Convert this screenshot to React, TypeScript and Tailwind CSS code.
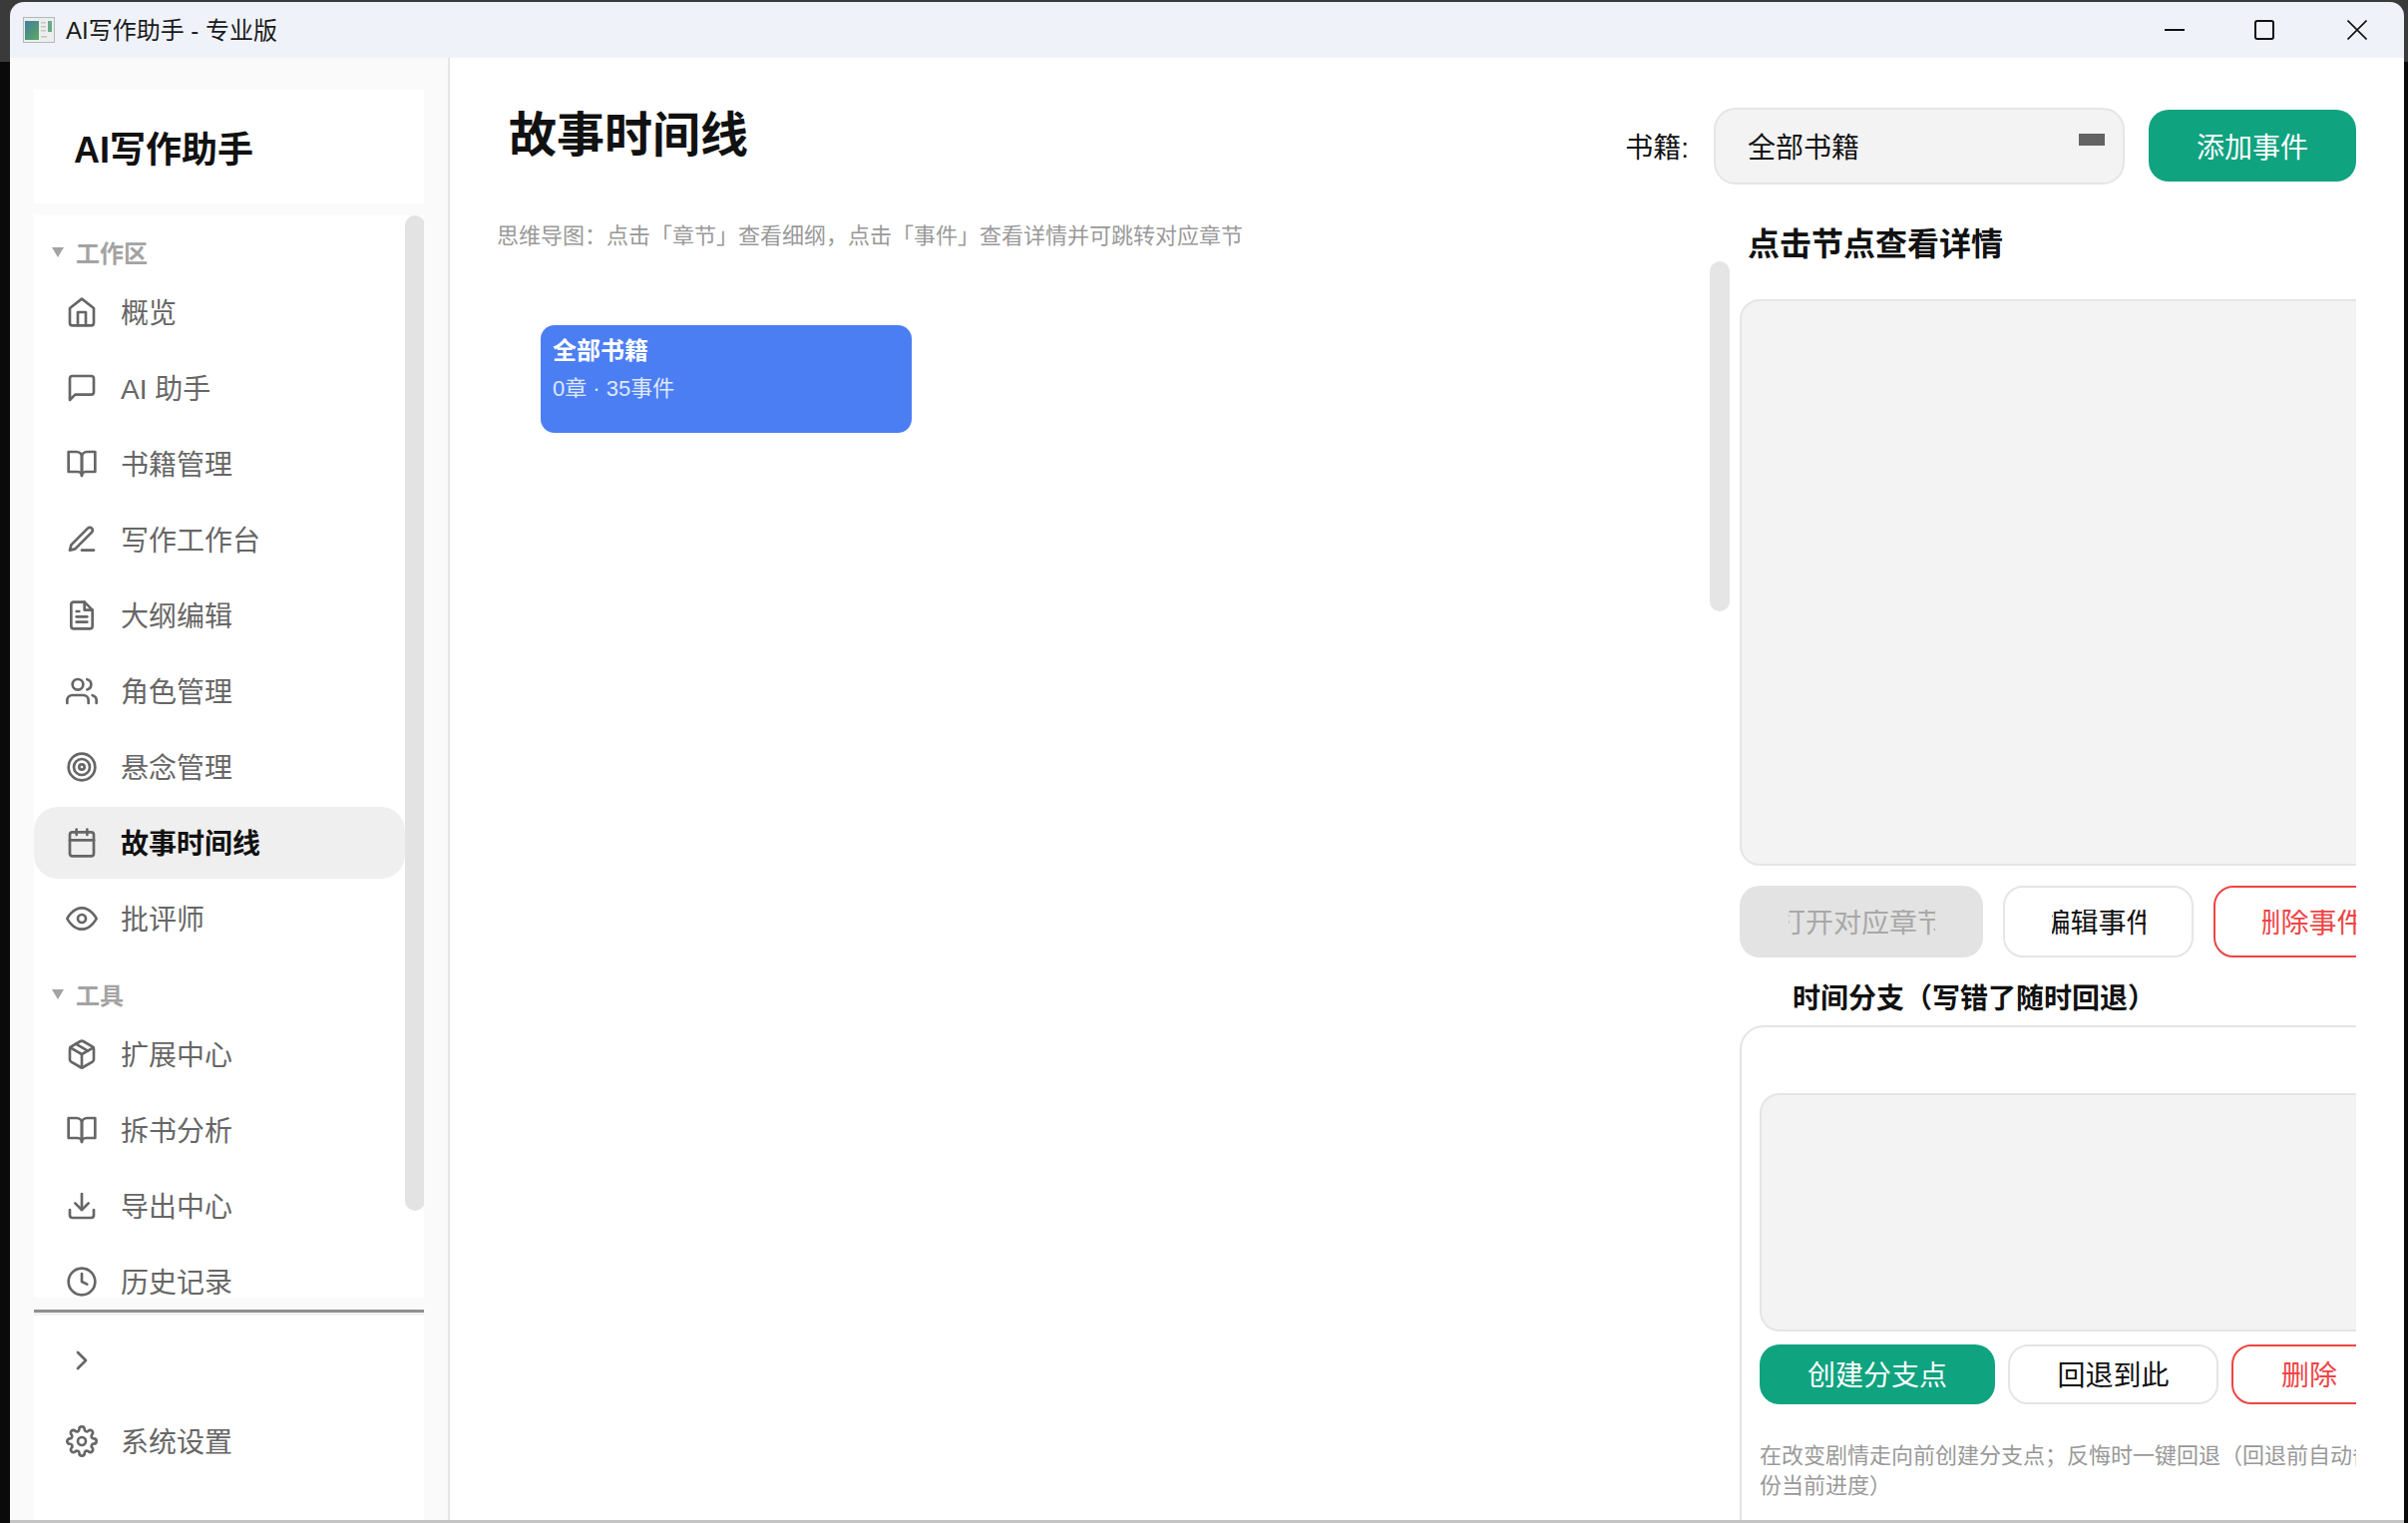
import React from 'react';
import {
  FiHome,
  FiMessageSquare,
  FiBookOpen,
  FiEdit3,
  FiFileText,
  FiUsers,
  FiTarget,
  FiCalendar,
  FiEye,
  FiPackage,
  FiDownload,
  FiClock,
  FiChevronRight,
  FiSettings,
} from 'react-icons/fi';

const FONT = "font-['Liberation_Sans','Noto_Sans_CJK_SC',sans-serif]";

type NavEntry = {
  label: string;
  icon: React.ComponentType<{ size?: number; className?: string }>;
  active?: boolean;
};

const workspace: NavEntry[] = [
  { label: '概览', icon: FiHome },
  { label: 'AI 助手', icon: FiMessageSquare },
  { label: '书籍管理', icon: FiBookOpen },
  { label: '写作工作台', icon: FiEdit3 },
  { label: '大纲编辑', icon: FiFileText },
  { label: '角色管理', icon: FiUsers },
  { label: '悬念管理', icon: FiTarget },
  { label: '故事时间线', icon: FiCalendar, active: true },
  { label: '批评师', icon: FiEye },
];

const tools: NavEntry[] = [
  { label: '扩展中心', icon: FiPackage },
  { label: '拆书分析', icon: FiBookOpen },
  { label: '导出中心', icon: FiDownload },
  { label: '历史记录', icon: FiClock },
];

function NavItem({ label, icon: Icon, active }: NavEntry) {
  return (
    <div className={`flex h-[72px] shrink-0 items-center rounded-[24px] pl-[32px] ${active ? 'bg-[#efefef]' : ''}`}>
      <Icon size={32} className="shrink-0 text-[#666666]" />
      <span className={`ml-[23px] pt-[3px] text-[28px] leading-none whitespace-nowrap ${active ? 'font-bold text-[#111111]' : 'text-[#666666]'}`}>
        {label}
      </span>
    </div>
  );
}

function SectionLabel({ label }: { label: string }) {
  return (
    <div className="mb-[3px] flex h-[42px] shrink-0 items-center pl-[18px]">
      <svg width="12" height="10" viewBox="0 0 12 10" className="shrink-0">
        <polygon points="0,0 12,0 6,10" fill="#a3a3a3" />
      </svg>
      <span className="ml-[12px] pt-[3px] text-[24px] leading-none font-bold text-[#a3a3a3]">{label}</span>
    </div>
  );
}

function Sidebar() {
  return (
    <aside className="flex w-[441px] shrink-0 flex-col border-r-2 border-[#e5e5e5] bg-[#fafafa] px-[24px] pt-[32px]">
      <div className="flex h-[114px] shrink-0 items-center bg-white pl-[40px]">
        <span className="pt-[8px] text-[36px] leading-none font-bold text-[#111111]">AI写作助手</span>
      </div>
      <div className="mt-[12px] flex h-[1085px] shrink-0 overflow-hidden bg-white">
        <div className="w-[372px] shrink-0 pt-[16px]">
          <SectionLabel label="工作区" />
          <div className="flex flex-col gap-1">
            {workspace.map((item) => (
              <NavItem key={item.label} {...item} />
            ))}
          </div>
          <div className="mt-[19px]">
            <SectionLabel label="工具" />
            <div className="flex flex-col gap-1">
              {tools.map((item) => (
                <NavItem key={item.label} {...item} />
              ))}
            </div>
          </div>
        </div>
        <div className="h-[998px] w-[20px] shrink-0 rounded-full bg-[#e3e3e3]" />
      </div>
      <div className="mt-[12px] h-[3px] shrink-0 bg-[#8f8f8f]" />
      <div className="h-[3px] shrink-0 bg-[#f0f0f0]" />
      <div className="flex flex-1 flex-col bg-white pt-[9px]">
        <div className="flex h-[72px] shrink-0 items-center pl-[32px]">
          <FiChevronRight size={32} className="text-[#666666]" />
        </div>
        <div className="mt-[9px]">
          <NavItem label="系统设置" icon={FiSettings} />
        </div>
      </div>
    </aside>
  );
}

function ClippedButton({
  label,
  width,
  clip,
  className,
}: {
  label: string;
  width: string;
  clip: string;
  className: string;
}) {
  return (
    <div className={`flex shrink-0 items-center justify-center rounded-[20px] pt-[4px] text-[28px] leading-none ${width} ${className}`}>
      <div className={`flex justify-center overflow-hidden ${clip}`}>
        <span className="shrink-0 whitespace-nowrap">{label}</span>
      </div>
    </div>
  );
}

function DetailColumn() {
  return (
    <div className="w-[618px] shrink-0 overflow-hidden">
      <h2 className="mt-[40px] ml-[8px] h-[40px] text-[32px] leading-[40px] font-bold text-[#111111]">点击节点查看详情</h2>
      <div className="mt-[35px] h-[568px] w-[680px] rounded-[20px] border-2 border-[#e5e5e5] bg-[#f3f3f3]" />
      <div className="mt-[20px] flex h-[72px] w-[700px] gap-[20px]">
        <ClippedButton label="打开对应章节" width="w-[244px]" clip="w-[147px]" className="bg-[#e3e3e3] text-[#a8a8a8]" />
        <ClippedButton label="编辑事件" width="w-[191px]" clip="w-[94px]" className="border-2 border-[#e5e5e5] bg-white text-[#111111]" />
        <ClippedButton label="删除事件" width="w-[191px]" clip="w-[94px]" className="border-2 border-[#ef4444] bg-white text-[#ef4444]" />
      </div>
      <h3 className="mt-[22px] ml-[53px] h-[40px] text-[28px] leading-[40px] font-bold text-[#111111]">时间分支（写错了随时回退）</h3>
      <div className="mt-[6px] h-[560px] w-[680px] rounded-[24px] border-2 border-[#e5e5e5] bg-white pt-[66px] pl-[18px]">
        <div className="h-[239px] w-[640px] rounded-[20px] border-2 border-[#e5e5e5] bg-[#f3f3f3]" />
        <div className="mt-[13px] flex h-[60px] gap-[13px]">
          <div className="flex w-[236px] items-center justify-center rounded-[20px] bg-[#10a37f] pt-[4px] text-[28px] leading-none text-white">创建分支点</div>
          <div className="flex w-[211px] items-center justify-center rounded-[20px] border-2 border-[#e5e5e5] bg-white pt-[4px] text-[28px] leading-none text-[#111111]">回退到此</div>
          <div className="flex w-[156px] items-center justify-center rounded-[20px] border-2 border-[#ef4444] bg-white pt-[4px] text-[28px] leading-none text-[#ef4444]">删除</div>
        </div>
        <p className="mt-[37px] w-[620px] text-[22px] leading-[30px] text-[#999999]">
          在改变剧情走向前创建分支点；反悔时一键回退（回退前自动备份当前进度）
        </p>
      </div>
    </div>
  );
}

function MainPanel() {
  return (
    <main className="flex min-w-0 flex-1 flex-col overflow-hidden bg-white pt-[50px] pr-[48px] pl-[47px]">
      <header className="flex h-[77px] shrink-0 items-start">
        <h1 className="mt-[3px] ml-[12px] text-[48px] leading-[50px] font-bold text-[#111111]">故事时间线</h1>
        <div className="ml-auto flex h-[77px] items-center">
          <span className="mr-[25px] pt-[5px] text-[28px] leading-none text-[#111111]">书籍:</span>
          <div className="relative flex h-[77px] w-[412px] items-center rounded-[22px] border-2 border-[#e5e5e5] bg-[#f3f3f3] pt-[5px] pl-[32px] text-[28px] leading-none text-[#111111]">
            全部书籍
            <span className="absolute top-[24px] right-[18px] h-[12px] w-[26px] bg-[#636363]" />
          </div>
          <div className="mb-[1px] ml-[24px] flex h-[72px] w-[208px] items-center justify-center rounded-[20px] bg-[#10a37f] pt-[5px] text-[28px] leading-none text-white">添加事件</div>
        </div>
      </header>
      <div className="flex min-h-0 flex-1">
        <div className="min-w-0 flex-1">
          <p className="mt-[37px] text-[22px] leading-[30px] text-[#999999]">
            思维导图：点击「章节」查看细纲，点击「事件」查看详情并可跳转对应章节
          </p>
          <div className="mt-[74px] ml-[44px] h-[108px] w-[372px] rounded-[14px] bg-[#4c7ef3] px-[12px] pt-[11px]">
            <div className="text-[24px] leading-[30px] font-bold text-white">全部书籍</div>
            <div className="mt-[8px] text-[22px] leading-[30px] text-[#dfe8fd]">0章 · 35事件</div>
          </div>
        </div>
        <div className="mt-[77px] mr-[10px] h-[351px] w-[20px] shrink-0 rounded-full bg-[#e5e5e5]" />
        <DetailColumn />
      </div>
    </main>
  );
}

function TitleBar() {
  return (
    <div className="flex h-[56px] shrink-0 items-center bg-[#eff3f9] pl-[13px]">
      <svg width="32" height="26" viewBox="0 0 32 26" className="shrink-0">
        <defs>
          <linearGradient id="appIconFill" x1="0" y1="0" x2="1" y2="1">
            <stop offset="0" stopColor="#3f7f9f" />
            <stop offset="1" stopColor="#5fa85f" />
          </linearGradient>
        </defs>
        <rect x="0.5" y="0.5" width="31" height="25" fill="#eceeee" stroke="#b5b8b8" />
        <rect x="2" y="4" width="14" height="19" fill="url(#appIconFill)" />
        <rect x="25" y="4" width="4" height="11" fill="#6aa88a" />
        <rect x="18" y="5" width="5" height="1.5" fill="#c2c6c6" />
        <rect x="18" y="9" width="5" height="1.5" fill="#c2c6c6" />
        <rect x="18" y="13" width="5" height="1.5" fill="#c2c6c6" />
        <rect x="18" y="19" width="6" height="1.5" fill="#c2c6c6" />
      </svg>
      <span className="ml-[11px] pt-[1px] text-[24px] leading-none text-[#1a1a1a]">AI写作助手 - 专业版</span>
      <div className="ml-auto flex h-full">
        <div className="flex h-full w-[88px] items-center justify-center">
          <span className="h-[2px] w-[20px] bg-[#111111]" />
        </div>
        <div className="flex h-full w-[92px] items-center justify-center">
          <span className="h-[20px] w-[20px] rounded-[3px] border-2 border-[#111111]" />
        </div>
        <div className="flex h-full w-[94px] items-center justify-center">
          <svg width="20" height="20" viewBox="0 0 20 20" fill="none" stroke="#111111" strokeWidth="1.6">
            <path d="M0.5 0.5l19 19M19.5 0.5L0.5 19.5" />
          </svg>
        </div>
      </div>
    </div>
  );
}

export default function App() {
  return (
    <div className={`flex h-[1527px] w-[2414px] flex-col overflow-hidden bg-[linear-gradient(#3a3a3a_0,#3a3a3a_62px,#0a0a0a_62px)] pt-[2px] pr-[4px] pl-[10px] ${FONT}`}>
      <div className="flex min-h-0 flex-1 flex-col overflow-hidden rounded-t-[14px]">
        <TitleBar />
        <div className="flex min-h-0 flex-1">
          <Sidebar />
          <MainPanel />
        </div>
      </div>
      <div className="h-[3px] shrink-0 bg-[#c4c4c4]" />
    </div>
  );
}
